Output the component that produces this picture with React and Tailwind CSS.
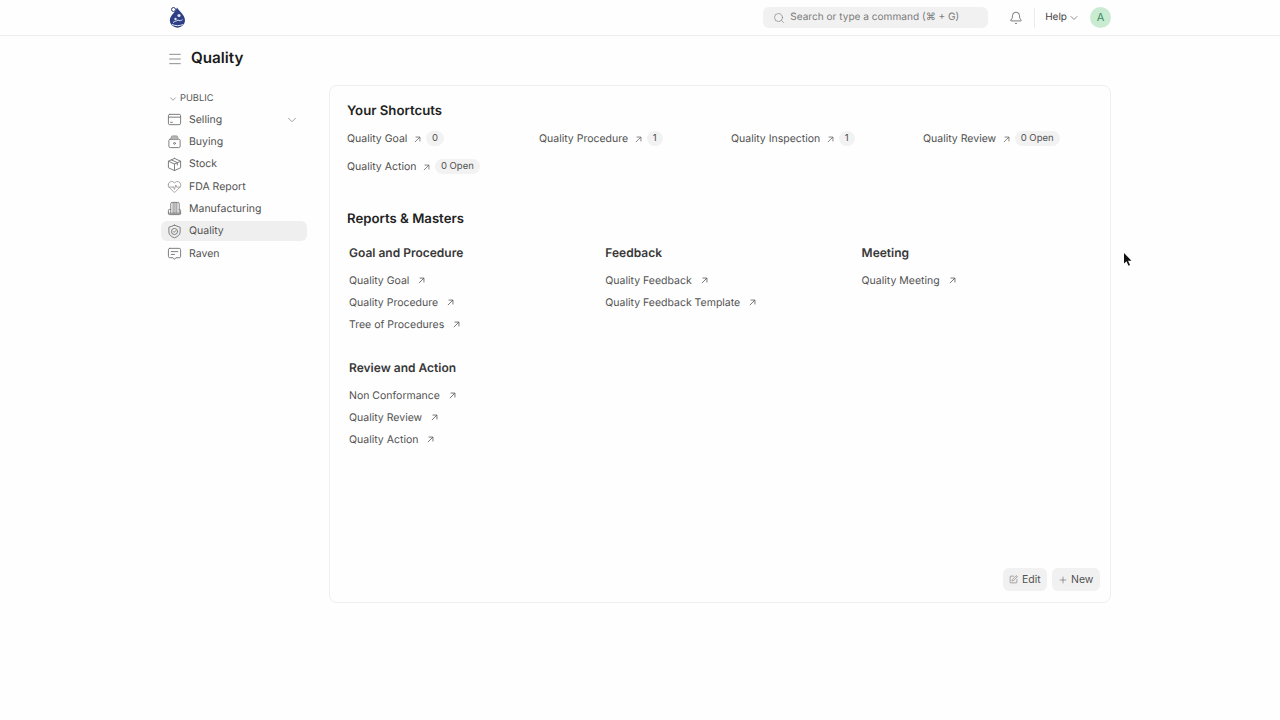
import React from "react";
import { Search, Bell, ChevronDown, Plus, SquarePen, HeartPulse, Menu } from "lucide-react";

const Logo = () => (
  <svg className="-mt-[1px]" width="20" height="24" viewBox="0 0 20 24">
    <path d="M9 2.500c1 2.500 8 7 8 13a7.600 7.200 0 0 1-15.200 0c0-3 2-5.500 3.500-7C6.500 7 8 5 9 2.500z" fill="#2f3f86" />
    <circle cx="5.500" cy="4.500" r="2" fill="#fff" stroke="#2f3f86" strokeWidth="1" />
    <circle cx="11" cy="10.500" r="1.600" fill="#dfe6f5" />
    <circle cx="7.500" cy="14" r="1.200" fill="#dfe6f5" />
    <path d="M5 17.500c2-1.500 3-1 5-2.500 1.500 1 3 1 4.500-.5M4 19.500c3 1.500 8 1.500 11 0" stroke="#dfe6f5" strokeWidth="1" fill="none" />
  </svg>
);

const Arrow = ({ className }) => (
  <svg className={className} viewBox="0 0 8 8" fill="none" stroke="currentColor" strokeWidth="0.9">
    <path d="M1 7 6.800 1.200M1.800 1.200h5v5" />
  </svg>
);

const iconProps = { viewBox: "0 0 16 16", fill: "none", stroke: "currentColor", strokeWidth: 1, strokeLinejoin: "round", strokeLinecap: "round" };

const SellingIcon = ({ className }) => (
  <svg className={className} {...iconProps}>
    <rect x="1.500" y="2.500" width="13" height="11" rx="1.500" />
    <path d="M1.500 5.500h13M3.800 11h2" />
  </svg>
);

const BuyingIcon = ({ className }) => (
  <svg className={className} {...iconProps}>
    <rect x="2" y="5.500" width="12" height="9" rx="1.500" />
    <path d="M4.500 5.500V3.500A1.500 1.500 0 0 1 6 2h4a1.500 1.500 0 0 1 1.500 1.500v2z" fill="#b5b5b5" stroke="#9a9a9a" />
    <circle cx="8" cy="10" r="1" />
  </svg>
);

const StockIcon = ({ className }) => (
  <svg className={className} {...iconProps}>
    <path d="M8 1.500 14.500 4.500v7L8 14.500 1.500 11.500v-7L8 1.500z" />
    <path d="M1.500 4.500 8 7.500l6.500-3M8 7.500v7M4.500 3 11 6v2.500" />
  </svg>
);

const ManufacturingIcon = ({ className }) => (
  <svg className={className} {...iconProps}>
    <path d="M4 13V3a1.500 1.500 0 0 1 1.500-1.500h6A1.500 1.500 0 0 1 13 3v10" />
    <path d="M6.500 2v11M8.500 2v11M10.500 2v11" />
    <path d="M4 9H2.500A1 1 0 0 0 1.500 10v3.500a1 1 0 0 0 1 1h11a1 1 0 0 0 1-1V10a1 1 0 0 0-1-1H13" />
    <path d="M1.500 13h13" />
  </svg>
);

const QualityIcon = ({ className }) => (
  <svg className={className} {...iconProps}>
    <path d="M8 1.300 14 3.500v5c0 3-2.500 5-6 6.200-3.500-1.200-6-3.200-6-6.200v-5L8 1.300z" />
    <circle cx="8" cy="8" r="3.300" />
    <path d="M6.600 8 7.600 9l1.800-2" />
  </svg>
);

const RavenIcon = ({ className }) => (
  <svg className={className} {...iconProps}>
    <path d="M3 2.500h10A1.500 1.500 0 0 1 14.500 4v7a1.500 1.500 0 0 1-1.500 1.500H9.500L8 14.300l-1.500-1.800H3A1.500 1.500 0 0 1 1.500 11V4A1.500 1.500 0 0 1 3 2.500z" />
    <path d="M4.500 6h7M4.500 9h3.500" />
  </svg>
);

const sidebarItems = [
  { label: "Selling", icon: SellingIcon, hasToggle: true },
  { label: "Buying", icon: BuyingIcon },
  { label: "Stock", icon: StockIcon },
  { label: "FDA Report", icon: HeartPulse },
  { label: "Manufacturing", icon: ManufacturingIcon },
  { label: "Quality", icon: QualityIcon, active: true },
  { label: "Raven", icon: RavenIcon },
];

const shortcuts = [
  { label: "Quality Goal", count: "0" },
  { label: "Quality Procedure", count: "1" },
  { label: "Quality Inspection", count: "1" },
  { label: "Quality Review", count: "0 Open" },
  { label: "Quality Action", count: "0 Open" },
];

const cardGroups = [
  { title: "Goal and Procedure", links: ["Quality Goal", "Quality Procedure", "Tree of Procedures"] },
  { title: "Feedback", links: ["Quality Feedback", "Quality Feedback Template"] },
  { title: "Meeting", links: ["Quality Meeting"] },
  { title: "Review and Action", links: ["Non Conformance", "Quality Review", "Quality Action"] },
];

const LinkGroup = ({ title, links }) => (
  <div className="h-[115px]">
    <h3 className="text-[12px] leading-[20px] font-semibold text-[#383838]">{title}</h3>
    <div className="mt-[7px]">
      {links.map((link) => (
        <div key={link} className="h-[21.800px] flex items-center text-[10.500px] text-[#525252]">
          <span>{link}</span>
          <Arrow className="w-[7px] h-[7px] ml-[9px] text-[#555]" />
        </div>
      ))}
    </div>
  </div>
);

export default function App() {
  return (
    <div className="relative min-h-[720px] bg-[#fefefe] font-['Inter',sans-serif] [text-rendering:geometricPrecision] overflow-hidden">
      {/* Navbar */}
      <header className="h-[36px] border-b border-[#ededed] flex items-center pl-[168px] pr-[169px]">
        <Logo />
        <div className="ml-auto w-[225px] h-[21px] rounded-md bg-[#f1f1f1] flex items-center pl-[10px] text-[#7c7c7c]">
          <Search className="w-[12px] h-[12px]" strokeWidth={1.300} />
          <span className="ml-[5px] pt-px text-[10.100px]">Search or type a command (⌘ + G)</span>
        </div>
        <Bell className="ml-[21px] w-[14px] h-[14px] text-[#444]" strokeWidth={1.200} />
        <div className="ml-[11px] w-px h-[20px] bg-[#ececec]" />
        <span className="ml-[10px] text-[10px] text-[#444]">Help</span>
        <ChevronDown className="ml-px w-[12px] h-[12px] text-[#555]" strokeWidth={1.300} />
        <div className="ml-[10px] w-[21px] h-[21px] rounded-full bg-[#c9ebd2] flex items-center justify-center text-[11px] text-[#3f8a5c]">A</div>
      </header>

      {/* Title row */}
      <div className="h-[45px] flex items-center pl-[167px]">
        <Menu className="w-[16px] h-[16px] text-[#666]" strokeWidth={1.100} />
        <h1 className="ml-[8px] text-[15.200px] font-semibold text-[#1a1a1a]">Quality</h1>
      </div>

      <div className="flex pl-[161px] pt-[4px]">
        {/* Sidebar */}
        <aside className="w-[146px] pt-[5.500px]">
          <div className="h-[17px] flex items-center pl-[7px] text-[9.300px] text-[#555]">
            <ChevronDown className="w-[10px] h-[10px] mr-[2px]" strokeWidth={1.300} />
            PUBLIC
          </div>
          {sidebarItems.map(({ label, icon: Icon, hasToggle, active }) => (
            <div key={label} className={`h-[20.300px] my-[2px] flex items-center pl-[6px] pr-[8px] rounded-md ${active ? "bg-[#efefef]" : ""}`}>
              <Icon className="w-[15px] h-[15px] text-[#777]" strokeWidth={1} />
              <span className="ml-[7px] text-[10.500px] text-[#525252]">{label}</span>
              {hasToggle && <ChevronDown className="ml-auto w-[14px] h-[14px] text-[#777]" strokeWidth={1.200} />}
            </div>
          ))}
        </aside>

        {/* Main card */}
        <main className="relative ml-[22px] w-[782px] h-[518px] border border-[#efefef] rounded-lg pl-[17px] pt-[15px]">
          <h2 className="text-[13.200px] leading-[20px] font-semibold text-[#222]">Your Shortcuts</h2>
          <div className="grid grid-cols-[repeat(4,192px)] auto-rows-[28px] mt-[4px]">
            {shortcuts.map(({ label, count }) => (
              <div key={label} className="flex items-center text-[10.500px] text-[#505050]">
                <span>{label}</span>
                <Arrow className="w-[7px] h-[7px] ml-[6.500px] text-[#666]" />
                <span className="ml-[5px] mb-px px-[6px] h-[15px] leading-[15px] rounded-full bg-[#f2f2f2] text-[9.500px]">{count}</span>
              </div>
            ))}
          </div>

          <h2 className="mt-[28px] text-[13.200px] leading-[20px] font-semibold text-[#222]">Reports &amp; Masters</h2>
          <div className="grid grid-cols-[repeat(3,256.300px)] mt-[14px] ml-[2px]">
            {cardGroups.map((group) => (
              <LinkGroup key={group.title} {...group} />
            ))}
          </div>

          <div className="absolute right-[10px] bottom-[11px] flex gap-[5px] text-[10.500px] text-[#525252]">
            <button className="h-[23px] w-[44px] pl-[6px] rounded-md bg-[#f1f1f1] flex items-center gap-[4px]">
              <SquarePen className="w-[9px] h-[9px]" strokeWidth={1.300} />
              Edit
            </button>
            <button className="h-[23px] w-[48px] pl-[6px] rounded-md bg-[#f1f1f1] flex items-center gap-[3px]">
              <Plus className="w-[10px] h-[10px]" strokeWidth={1.300} />
              New
            </button>
          </div>
        </main>
      </div>

      {/* Mouse pointer */}
      <svg className="absolute left-[1123px] top-[252px]" width="10" height="15" viewBox="0 0 10 15">
        <path d="M1 1v10.500l2.500-2.300 2 4.500 1.500-.7-2-4.300h3.500L1 1z" fill="#111" />
      </svg>
    </div>
  );
}
